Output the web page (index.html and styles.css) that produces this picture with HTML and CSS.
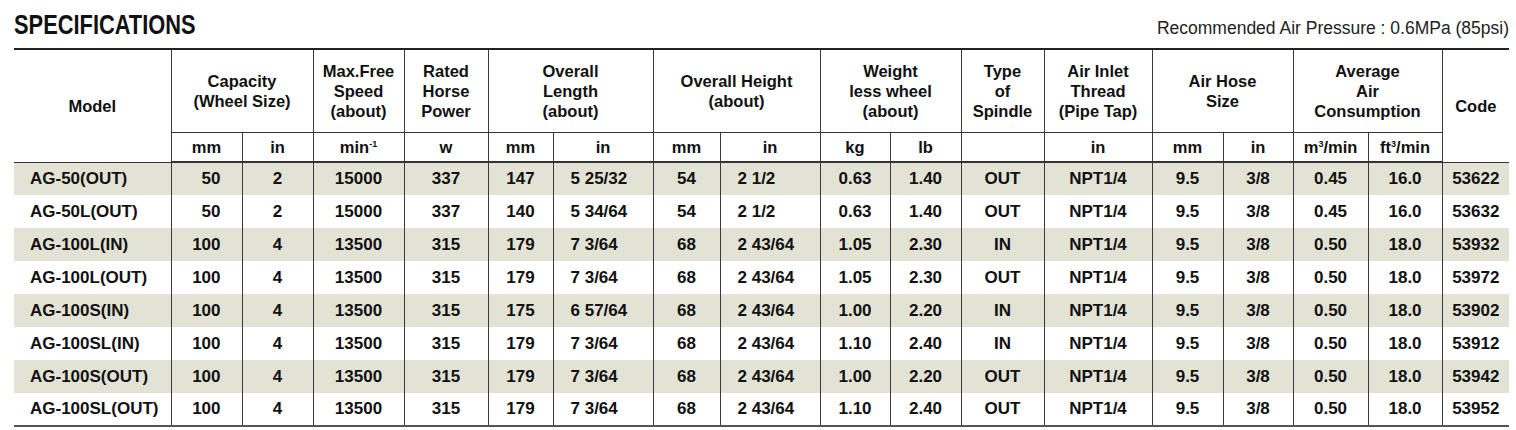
FILE: index.html
```html
<!DOCTYPE html>
<html lang="en">
<head>
  <meta charset="UTF-8" />
  <title>Specifications</title>
  <link rel="stylesheet" href="styles.css">
</head>
<body>

  <!-- TITLE -->
  <div class="title-bar">
    <h1 class="title">SPECIFICATIONS</h1>
    <div class="pressure">Recommended Air Pressure : 0.6MPa (85psi)</div>
  </div>

  <!-- SPEC TABLE -->
  <table class="spec">
    <colgroup>
      <col><col><col><col><col><col><col><col><col>
      <col><col><col><col><col><col><col><col><col>
    </colgroup>
    <thead>
      <tr class="head-main">
        <th rowspan="2" class="first">Model</th>
        <th colspan="2">Capacity<br>(Wheel Size)</th>
        <th>Max.Free<br>Speed<br>(about)</th>
        <th>Rated<br>Horse<br>Power</th>
        <th colspan="2">Overall<br>Length<br>(about)</th>
        <th colspan="2">Overall Height<br>(about)</th>
        <th colspan="2">Weight<br>less wheel<br>(about)</th>
        <th>Type<br>of<br>Spindle</th>
        <th>Air Inlet<br>Thread<br>(Pipe Tap)</th>
        <th colspan="2">Air Hose<br>Size</th>
        <th colspan="2">Average<br>Air<br>Consumption</th>
        <th rowspan="2">Code</th>
      </tr>
      <tr class="head-unit">
        <th>mm</th>
        <th>in</th>
        <th>min<sup>-1</sup></th>
        <th>w</th>
        <th>mm</th>
        <th>in</th>
        <th>mm</th>
        <th>in</th>
        <th>kg</th>
        <th>lb</th>
        <th></th>
        <th>in</th>
        <th>mm</th>
        <th>in</th>
        <th>m<sup>3</sup>/min</th>
        <th>ft<sup>3</sup>/min</th>
      </tr>
    </thead>
    <tbody>
      <tr>
        <td class="model">AG-50(OUT)</td><td class="right">50</td><td>2</td><td>15000</td><td>337</td>
        <td>147</td><td class="left">5 25/32</td><td>54</td><td class="left">2 1/2</td><td>0.63</td><td>1.40</td>
        <td>OUT</td><td>NPT1/4</td><td>9.5</td><td>3/8</td><td>0.45</td><td>16.0</td><td>53622</td>
      </tr>
      <tr>
        <td class="model">AG-50L(OUT)</td><td class="right">50</td><td>2</td><td>15000</td><td>337</td>
        <td>140</td><td class="left">5 34/64</td><td>54</td><td class="left">2 1/2</td><td>0.63</td><td>1.40</td>
        <td>OUT</td><td>NPT1/4</td><td>9.5</td><td>3/8</td><td>0.45</td><td>16.0</td><td>53632</td>
      </tr>
      <tr>
        <td class="model">AG-100L(IN)</td><td class="right">100</td><td>4</td><td>13500</td><td>315</td>
        <td>179</td><td class="left">7 3/64</td><td>68</td><td class="left">2 43/64</td><td>1.05</td><td>2.30</td>
        <td>IN</td><td>NPT1/4</td><td>9.5</td><td>3/8</td><td>0.50</td><td>18.0</td><td>53932</td>
      </tr>
      <tr>
        <td class="model">AG-100L(OUT)</td><td class="right">100</td><td>4</td><td>13500</td><td>315</td>
        <td>179</td><td class="left">7 3/64</td><td>68</td><td class="left">2 43/64</td><td>1.05</td><td>2.30</td>
        <td>OUT</td><td>NPT1/4</td><td>9.5</td><td>3/8</td><td>0.50</td><td>18.0</td><td>53972</td>
      </tr>
      <tr>
        <td class="model">AG-100S(IN)</td><td class="right">100</td><td>4</td><td>13500</td><td>315</td>
        <td>175</td><td class="left">6 57/64</td><td>68</td><td class="left">2 43/64</td><td>1.00</td><td>2.20</td>
        <td>IN</td><td>NPT1/4</td><td>9.5</td><td>3/8</td><td>0.50</td><td>18.0</td><td>53902</td>
      </tr>
      <tr>
        <td class="model">AG-100SL(IN)</td><td class="right">100</td><td>4</td><td>13500</td><td>315</td>
        <td>179</td><td class="left">7 3/64</td><td>68</td><td class="left">2 43/64</td><td>1.10</td><td>2.40</td>
        <td>IN</td><td>NPT1/4</td><td>9.5</td><td>3/8</td><td>0.50</td><td>18.0</td><td>53912</td>
      </tr>
      <tr>
        <td class="model">AG-100S(OUT)</td><td class="right">100</td><td>4</td><td>13500</td><td>315</td>
        <td>179</td><td class="left">7 3/64</td><td>68</td><td class="left">2 43/64</td><td>1.00</td><td>2.20</td>
        <td>OUT</td><td>NPT1/4</td><td>9.5</td><td>3/8</td><td>0.50</td><td>18.0</td><td>53942</td>
      </tr>
      <tr>
        <td class="model">AG-100SL(OUT)</td><td class="right">100</td><td>4</td><td>13500</td><td>315</td>
        <td>179</td><td class="left">7 3/64</td><td>68</td><td class="left">2 43/64</td><td>1.10</td><td>2.40</td>
        <td>OUT</td><td>NPT1/4</td><td>9.5</td><td>3/8</td><td>0.50</td><td>18.0</td><td>53952</td>
      </tr>
    </tbody>
  </table>

</body>
</html>
```

FILE: styles.css
```css
* {
  box-sizing: border-box;
}

body {
  margin: 0;
  background: #fff;
  color: #111;
  font-family: 'Liberation Sans', Arial, sans-serif;
}

/* Title */
.title-bar {
  display: flex;
  justify-content: space-between;
  align-items: baseline;
  height: 48px;
  padding: 11px 7px 0 14px;
}

.title {
  margin: 0;
  font-size: 28px;
  line-height: 28px;
  font-weight: bold;
  transform: scaleX(0.78);
  transform-origin: left center;
}

.pressure {
  font-size: 17.5px;
  color: #222;
}

/* Table */
.spec {
  margin-left: 14px;
  width: 1495px;
  table-layout: fixed;
  border-collapse: collapse;
  font-weight: bold;
}

.spec col:nth-child(1) { width: 157px; }
.spec col:nth-child(2) { width: 71px; }
.spec col:nth-child(3) { width: 71px; }
.spec col:nth-child(4) { width: 91px; }
.spec col:nth-child(5) { width: 84px; }
.spec col:nth-child(6) { width: 65px; }
.spec col:nth-child(7) { width: 100px; }
.spec col:nth-child(8) { width: 67px; }
.spec col:nth-child(9) { width: 100px; }
.spec col:nth-child(10) { width: 70px; }
.spec col:nth-child(11) { width: 71px; }
.spec col:nth-child(12) { width: 83px; }
.spec col:nth-child(13) { width: 108px; }
.spec col:nth-child(14) { width: 71px; }
.spec col:nth-child(15) { width: 70px; }
.spec col:nth-child(16) { width: 75px; }
.spec col:nth-child(17) { width: 74px; }
.spec col:nth-child(18) { width: 67px; }

.spec th {
  padding: 0;
  font-size: 16.5px;
  line-height: 20px;
  font-weight: bold;
  text-align: center;
  vertical-align: middle;
  border-left: 1px solid #3a3a3a;
  border-bottom: 1px solid #333;
}

.spec th.first {
  border-left: none;
}

.head-main th {
  height: 83px;
  border-top: 2px solid #222;
}

.head-unit th {
  height: 30px;
  border-bottom: 2px solid #333;
}

.spec sup {
  font-size: 9px;
  line-height: 0;
  vertical-align: 6px;
}

.spec td {
  height: 33px;
  padding: 0;
  font-size: 17px;
  line-height: 20px;
  text-align: center;
  vertical-align: middle;
  border-left: 1px solid #3a3a3a;
}

.spec td.model {
  border-left: none;
  text-align: left;
  padding-left: 16px;
}

.spec td.right {
  text-align: right;
  padding-right: 21px;
}

.spec td.left {
  text-align: left;
  padding-left: 17px;
}

.spec tbody tr:nth-child(odd) {
  background: #e3e3d5;
}

.spec tbody tr:last-child td {
  border-bottom: 2px solid #555;
}
```
